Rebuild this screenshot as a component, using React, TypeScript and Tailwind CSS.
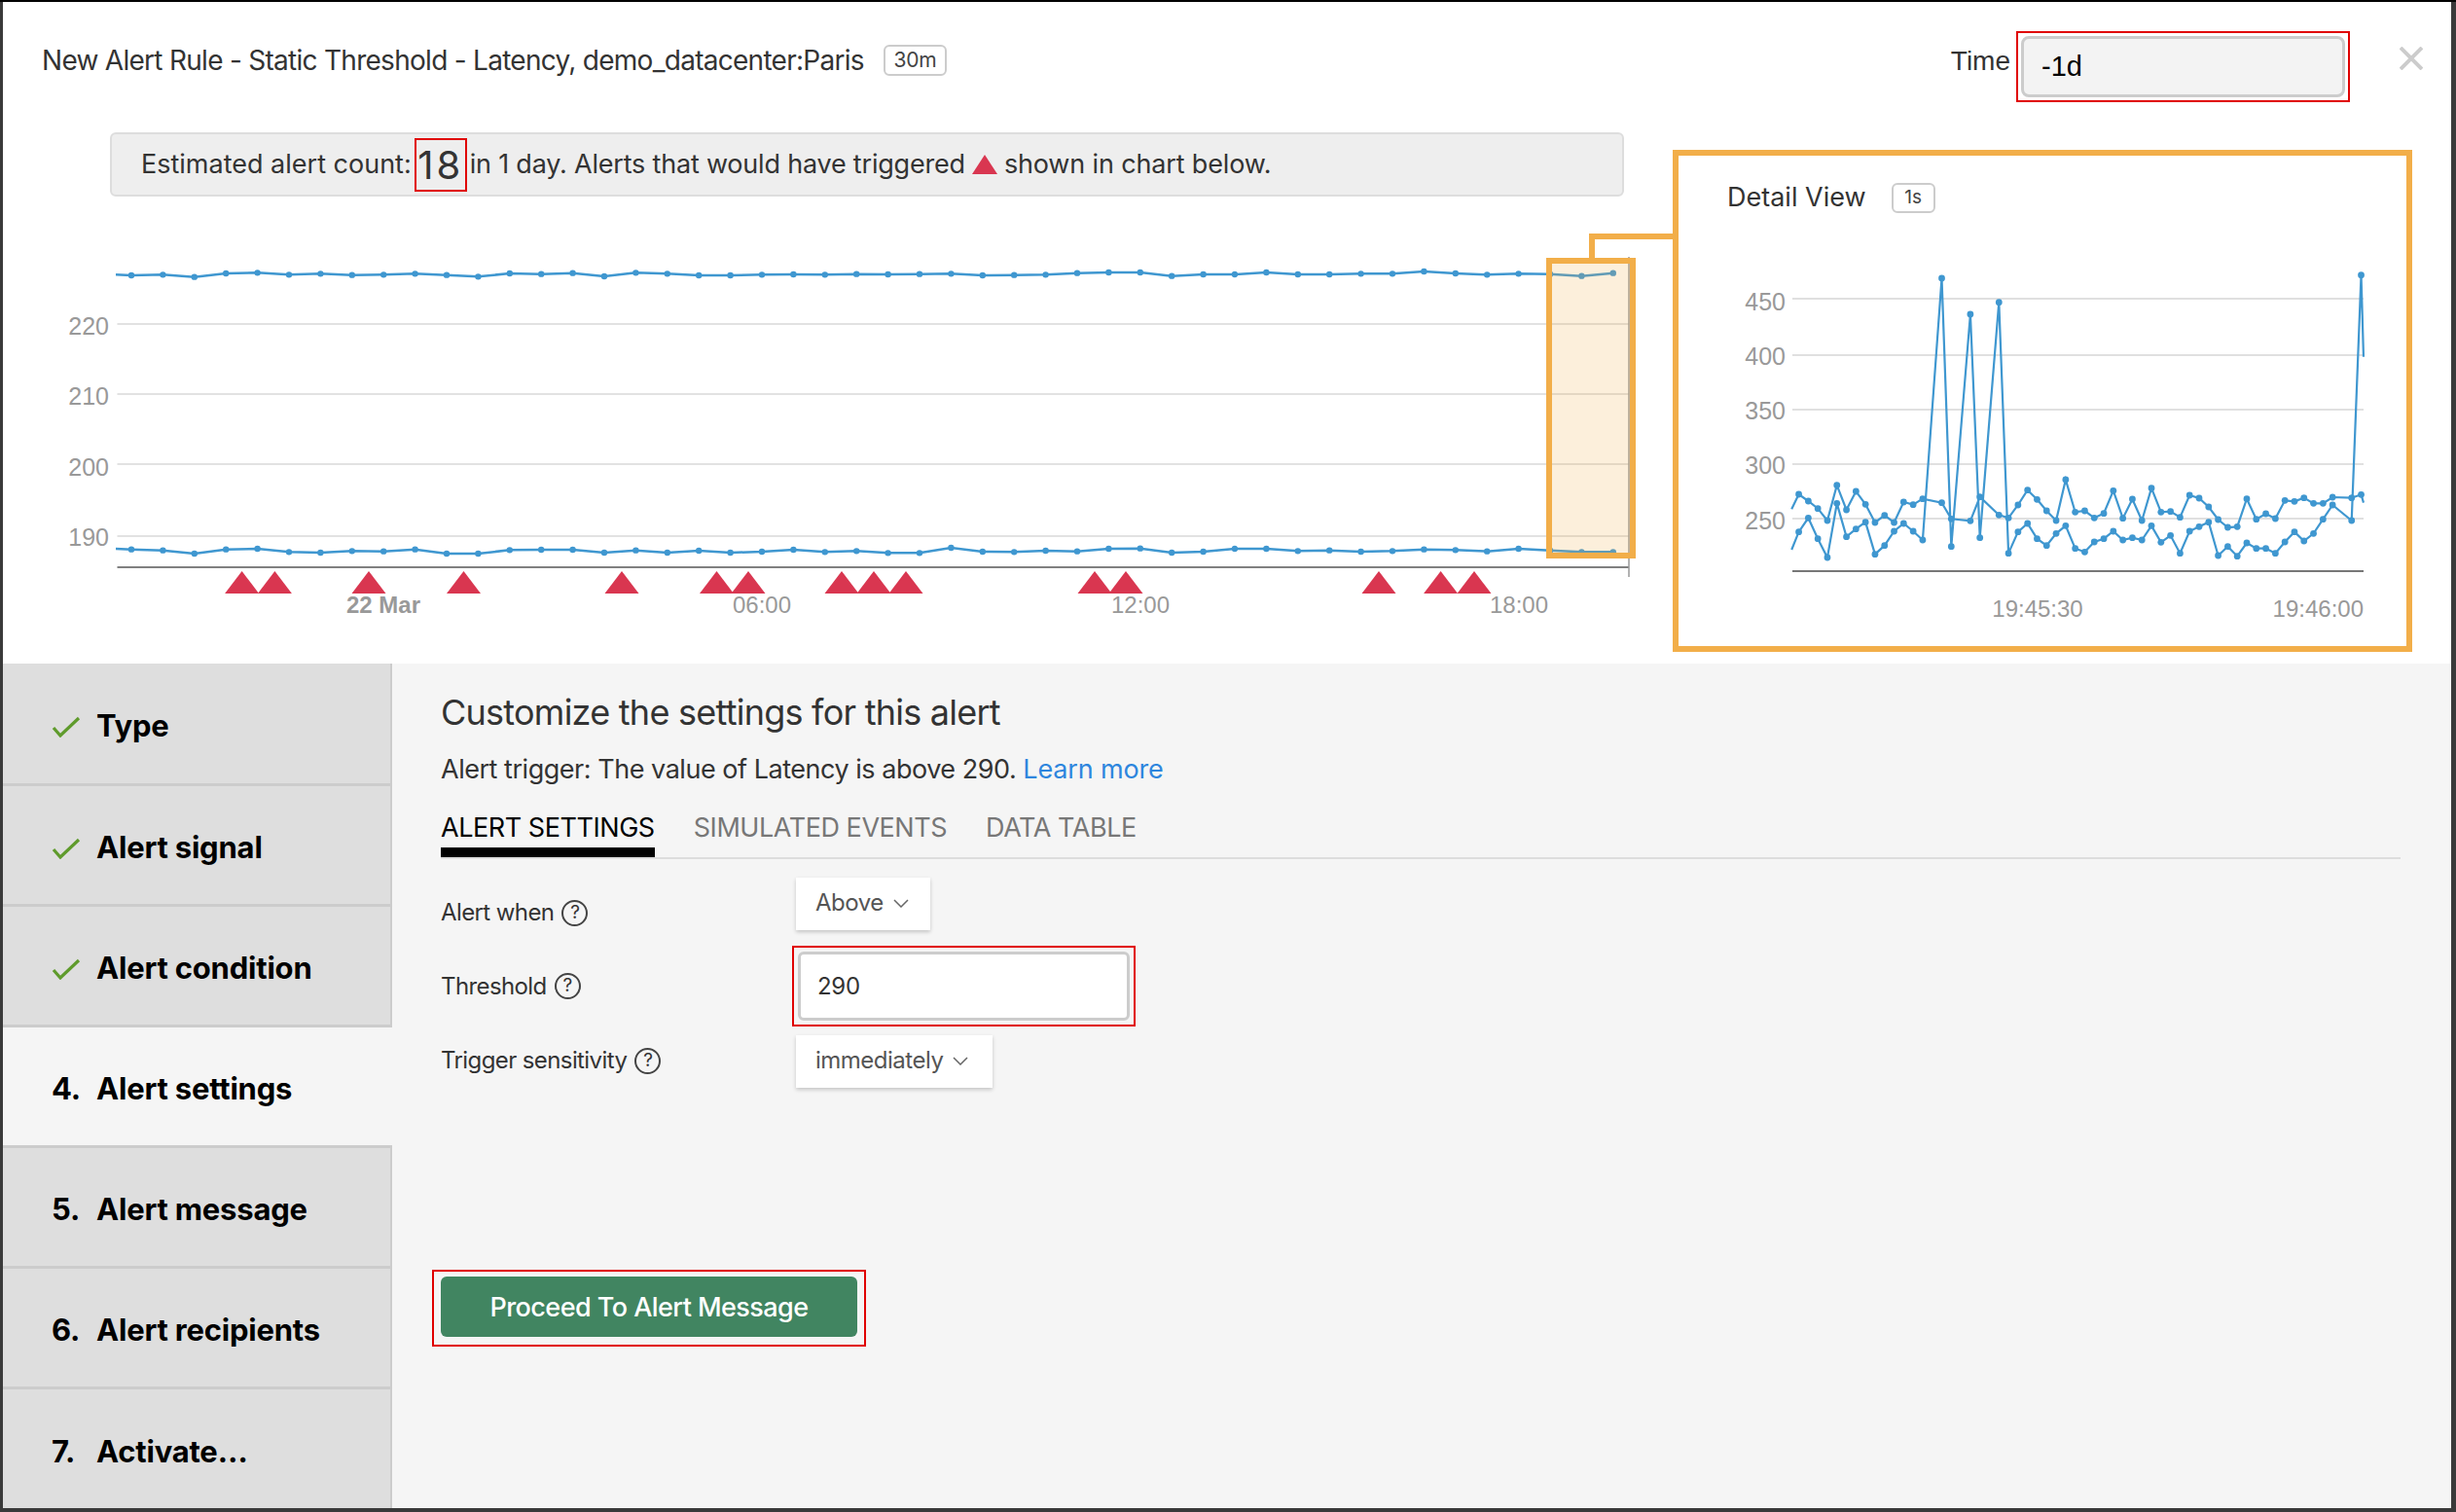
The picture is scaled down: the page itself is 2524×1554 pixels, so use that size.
import React from 'react';

const LINE = '#3f97d0';
const ORANGE = '#f2ae49';

// main chart samples, read off the picture (y offset in 1/3 px from 240)
const topSeries = [129, 127, 134, 123, 121, 127, 124, 128, 127, 124, 128, 133, 123, 125, 122, 132, 121, 124, 129, 129, 127, 126, 127, 125, 126, 125, 124, 129, 128, 127, 122, 120, 120, 131, 126, 126, 120, 126, 126, 124, 124, 117, 123, 127, 124, 125, 131, 122];
const bottomSeries = [974, 977, 987, 974, 972, 982, 984, 979, 980, 974, 987, 987, 976, 975, 975, 984, 977, 984, 978, 984, 981, 975, 982, 979, 985, 985, 969, 981, 982, 978, 980, 972, 971, 984, 981, 972, 972, 979, 977, 981, 979, 974, 976, 980, 972, 977, 982, 982];
const markers = [248.6, 282.4, 379, 476.5, 639, 736.5, 769, 865, 898, 931, 1125, 1157, 1417, 1480.6, 1515];

const detailA = [[52, 790], [70, 744], [94, 765], [118, 788], [142, 825], [166, 716], [190, 792], [214, 735], [238, 775], [262, 831], [286, 809], [310, 831], [334, 768], [358, 776], [382, 758], [430, 770], [454, 820], [502, 826], [526, 752], [574, 808], [598, 817], [622, 777], [646, 731], [670, 760], [694, 795], [718, 825], [742, 699], [766, 799], [790, 795], [814, 817], [838, 803], [862, 733], [886, 818], [910, 759], [934, 825], [958, 725], [982, 799], [1006, 797], [1030, 815], [1054, 747], [1078, 756], [1102, 783], [1126, 822], [1150, 846], [1174, 844], [1198, 758], [1222, 821], [1246, 804], [1270, 819], [1294, 763], [1318, 766], [1342, 755], [1366, 772], [1390, 772], [1414, 753], [1462, 755], [1486, 745], [1492, 770]];
const detailB = [[52, 915], [70, 860], [94, 817], [118, 881], [142, 939], [166, 772], [190, 875], [214, 851], [238, 830], [262, 929], [286, 902], [310, 858], [334, 834], [358, 858], [382, 885], [430, 78], [454, 905], [502, 189], [526, 878], [574, 152], [598, 926], [622, 860], [646, 834], [670, 881], [694, 902], [718, 865], [742, 841], [766, 911], [790, 922], [814, 891], [838, 881], [862, 858], [886, 885], [910, 878], [934, 885], [958, 841], [982, 892], [1006, 871], [1030, 926], [1054, 858], [1078, 844], [1102, 830], [1126, 933], [1150, 905], [1174, 935], [1198, 894], [1222, 911], [1246, 911], [1270, 926], [1294, 891], [1318, 860], [1342, 888], [1366, 865], [1390, 821], [1414, 777], [1462, 825], [1486, 68], [1492, 320]];

const mainPts = (s: number[]) => s.map((v, i) => [135 + 32.4 * i, 240 + v / 3]);
const detailPts = (s: number[][]) => s.map(([x, y]) => [1820 + x / 2.45, 260 + y / 3]);
const toPath = (p: number[][]) => p.map(([x, y]) => `${x},${y}`).join(' ');

const MainChart = () => {
  const top = mainPts(topSeries);
  const bottom = mainPts(bottomSeries);
  return (
    <svg viewBox="3 202 1716 480" className="block w-[1716px] h-[480px]">
      {[333, 405, 477, 551].map((y) => (
        <line key={y} x1={120.5} x2={1674} y1={y} y2={y} stroke="#e2e2e2" strokeWidth={2} />
      ))}
      {[['220', 335], ['210', 407], ['200', 480], ['190', 552]].map(([t, y]) => (
        <text key={t} x={112} y={Number(y) + 9} textAnchor="end" className="font-['Liberation_Sans',sans-serif] text-[25px] fill-[#999]">{t}</text>
      ))}
      <line x1={120.5} x2={1674} y1={583} y2={583} stroke="#808080" strokeWidth={2} />
      <line x1={1674} x2={1674} y1={264} y2={593} stroke="#999" strokeWidth={1.5} />
      <polyline points={toPath([[119, 282.3], ...top])} fill="none" stroke={LINE} strokeWidth={2.5} />
      <polyline points={toPath([[119, 564], ...bottom])} fill="none" stroke={LINE} strokeWidth={2.5} />
      {[...top, ...bottom].map(([x, y], i) => (
        <circle key={i} cx={x} cy={y} r={3.2} fill={LINE} />
      ))}
      {markers.map((x) => (
        <polygon key={x} points={`${x},587 ${x + 17.5},610 ${x - 17.5},610`} fill="#d93650" />
      ))}
      <text x={394} y={630} textAnchor="middle" className="font-['Liberation_Sans',sans-serif] text-[24px] font-bold fill-[#999]">22 Mar</text>
      <text x={783} y={630} textAnchor="middle" className="font-['Liberation_Sans',sans-serif] text-[24px] fill-[#999]">06:00</text>
      <text x={1172} y={630} textAnchor="middle" className="font-['Liberation_Sans',sans-serif] text-[24px] fill-[#999]">12:00</text>
      <text x={1561} y={630} textAnchor="middle" className="font-['Liberation_Sans',sans-serif] text-[24px] fill-[#999]">18:00</text>
      <rect x={1592} y={268} width={86} height={303} fill={ORANGE} fillOpacity={0.2} stroke={ORANGE} strokeWidth={6} />
      <path d="M1636 265V243H1719" fill="none" stroke={ORANGE} strokeWidth={6} />
    </svg>
  );
};

const DetailChart = () => {
  const a = detailPts(detailA);
  const b = detailPts(detailB);
  return (
    <svg viewBox="1725 240 748 424" className="block w-[748px] h-[424px]">
      {[307, 365, 421, 477, 533].map((y) => (
        <line key={y} x1={1842} x2={2429} y1={y} y2={y} stroke="#e0e0e0" strokeWidth={2} />
      ))}
      {[['450', 310], ['400', 366], ['350', 422], ['300', 478], ['250', 535]].map(([t, y]) => (
        <text key={t} x={1835} y={Number(y) + 9} textAnchor="end" className="font-['Liberation_Sans',sans-serif] text-[25px] fill-[#999]">{t}</text>
      ))}
      <line x1={1842} x2={2429} y1={587} y2={587} stroke="#777" strokeWidth={2} />
      <polyline points={toPath(a)} fill="none" stroke={LINE} strokeWidth={2.2} />
      <polyline points={toPath(b)} fill="none" stroke={LINE} strokeWidth={2.2} />
      {[...a.slice(1, -1), ...b.slice(1, -1)].map(([x, y], i) => (
        <circle key={i} cx={x} cy={y} r={3.4} fill={LINE} />
      ))}
      <text x={2094} y={634} textAnchor="middle" className="font-['Liberation_Sans',sans-serif] text-[24px] fill-[#999]">19:45:30</text>
      <text x={2429} y={634} textAnchor="end" className="font-['Liberation_Sans',sans-serif] text-[24px] fill-[#999]">19:46:00</text>
    </svg>
  );
};

const Badge = ({ children, className }: { children: React.ReactNode; className: string }) => (
  <span className={`flex items-center justify-center rounded-[6px] border-2 border-[#ccc] text-[#444] ${className}`}>
    {children}
  </span>
);

const Help = () => (
  <span className="flex w-[27px] h-[27px] items-center justify-center rounded-full border-2 border-[#444] text-[19px] text-[#333]">?</span>
);

const Chevron = () => (
  <svg viewBox="0 0 16 9" className="w-[16px] h-[9px]">
    <polyline points="1,1 8,8 15,1" fill="none" stroke="#666" strokeWidth={1.5} />
  </svg>
);

const Check = () => (
  <svg viewBox="0 0 30 22" className="w-[30px] h-[22px]">
    <polyline points="2,12 9,20 28,2" fill="none" stroke="#5f9b2c" strokeWidth={3.2} />
  </svg>
);

const steps = [
  { label: 'Type', done: true },
  { label: 'Alert signal', done: true },
  { label: 'Alert condition', done: true },
  { label: 'Alert settings', num: '4.', active: true },
  { label: 'Alert message', num: '5.' },
  { label: 'Alert recipients', num: '6.' },
  { label: 'Activate…', num: '7.' },
];

const Dropdown = ({ label, className }: { label: string; className: string }) => (
  <div className={`flex h-[54px] items-center gap-[10px] bg-white pl-[20px] pb-[2px] text-[24px] tracking-[-0.5px] text-[#555] shadow-[0_2px_4px_rgba(0,0,0,0.2)] ${className}`}>
    {label}
    <Chevron />
  </div>
);

export default function App() {
  return (
    <div className="flex h-[1554px] w-[2524px] flex-col bg-[#3a3a3a] pl-[3px] pr-[5px] pb-[4px] font-['Inter',sans-serif]">
      <div className="h-[2px] -ml-[3px] -mr-[5px] shrink-0 bg-black" />
      <div className="flex h-[680px] shrink-0 flex-col bg-white">
        <div className="flex h-[120px] shrink-0 items-center pl-[40px] pr-[29px]">
          <h1 className="text-[28px] font-normal tracking-[-0.72px] text-[#333]">New Alert Rule - Static Threshold - Latency, demo_datacenter:Paris</h1>
          <Badge className="ml-[20px] h-[32px] w-[65px] text-[21px] tracking-[-0.3px]">30m</Badge>
          <span className="ml-auto mr-[6px] mt-[2px] font-['Liberation_Sans',sans-serif] text-[28px] text-[#333]">Time</span>
          <div className="mt-[13px] h-[73px] w-[343px] border-2 border-[#e00000] p-[3px]">
            <div className="flex h-full items-center rounded-[8px] border-[3px] border-[#ccc] bg-[#f3f3f3] pl-[18px] font-['Liberation_Sans',sans-serif] text-[29px] text-black">-1d</div>
          </div>
          <svg viewBox="0 0 24 24" className="mb-[4px] ml-[51px] h-[24px] w-[24px]">
            <path d="M1 1L23 23M23 1L1 23" stroke="#ccc" strokeWidth={4} fill="none" />
          </svg>
        </div>
        <div className="flex flex-1">
          <div className="w-[1716px] shrink-0">
            <div className="ml-[110px] mt-[14px] flex h-[66px] w-[1556px] items-center rounded-[6px] border-2 border-[#ddd] bg-[#eee] pl-[30px] text-[27px] text-[#333]">
              <span>Estimated alert count:</span>
              <span className="mx-[3px] flex h-[55px] w-[54px] items-center justify-center border-2 border-[#e00000] pt-[2px] text-[40px] tracking-[3px]">18</span>
              <span className="tracking-[-0.2px]">in 1 day. Alerts that would have triggered</span>
              <svg viewBox="0 0 26 20" className="mx-[7px] h-[20px] w-[26px]">
                <polygon points="13,0 26,20 0,20" fill="#d93650" />
              </svg>
              <span className="tracking-[-0.15px]">shown in chart below.</span>
            </div>
            <MainChart />
          </div>
          <div className="mt-[32px] h-[516px] w-[760px] border-[6px] border-[#f2ae49] bg-white">
            <div className="flex h-[80px] items-center pl-[50px] pt-[6px]">
              <span className="text-[27px] text-[#333]">Detail View</span>
              <Badge className="ml-[26px] h-[31px] w-[45px] text-[19px]">1s</Badge>
            </div>
            <DetailChart />
          </div>
        </div>
      </div>
      <div className="flex flex-1 bg-[#f5f5f5]">
        <div className="flex w-[400px] shrink-0 flex-col border-r-2 border-[#ccc]">
          {steps.map((s, i) => (
            <div
              key={s.label}
              className={`flex items-center pl-[50px] pt-[6px] text-[31px] font-bold tracking-[-0.2px] text-black ${i === 0 ? 'h-[126px]' : i === 6 ? 'flex-1' : 'h-[124px]'} ${i < 6 ? 'border-b-[3px] border-[#ccc]' : ''} ${s.active ? 'bg-[#f5f5f5] -mr-[2px] relative' : 'bg-[#dedede]'}`}
            >
              <span className="flex w-[46px] items-center">{s.done ? <Check /> : s.num}</span>
              {s.label}
            </div>
          ))}
        </div>
        <div className="flex-1 pl-[50px] pr-[52px]">
          <h2 className="mt-[28px] h-[44px] text-[36px] font-normal leading-[44px] tracking-[-0.75px] text-[#333]">Customize the settings for this alert</h2>
          <p className="mt-[19px] h-[36px] text-[27px] leading-[36px] text-[#333]">
            <span className="tracking-[-0.47px]">Alert trigger: The value of Latency is above 290. </span>
            <span className="tracking-[-0.15px] text-[#2e86de]">Learn more</span>
          </p>
          <div className="mt-[25px] flex gap-[40px] border-b-2 border-[#ddd] text-[27px] leading-[32px] tracking-[-0.45px]">
            <span className="border-b-[10px] border-black pb-[4px] pt-[1px] text-black">ALERT SETTINGS</span>
            <span className="pt-[1px] text-[#777]">SIMULATED EVENTS</span>
            <span className="pt-[1px] text-[#777]">DATA TABLE</span>
          </div>
          <div className="mt-[19px] flex items-start">
            <div className="flex w-[365px] items-center gap-[8px] pt-[18px] text-[24px] tracking-[-0.6px] text-[#333]">Alert when <Help /></div>
            <Dropdown label="Above" className="w-[138px]" />
          </div>
          <div className="mt-[16px] flex items-center">
            <div className="flex w-[361px] items-center gap-[8px] text-[24px] tracking-[-0.6px] text-[#333]">Threshold <Help /></div>
            <div className="h-[83px] w-[353px] border-2 border-[#e00000] p-[4px]">
              <div className="flex h-full items-center rounded-[6px] border-[3px] border-[#ccc] bg-white pl-[17px] text-[24px] tracking-[-0.3px] text-[#333]">290</div>
            </div>
          </div>
          <div className="mt-[9px] flex items-start">
            <div className="flex w-[365px] items-center gap-[8px] pt-[8px] text-[24px] tracking-[-0.6px] text-[#333]">Trigger sensitivity <Help /></div>
            <Dropdown label="immediately" className="w-[202px]" />
          </div>
          <div className="-ml-[9px] mt-[187px] w-[446px] border-2 border-[#e00000] px-[7px] pb-[8px] pt-[5px]">
            <button className="flex h-[62px] w-full items-center justify-center rounded-[6px] bg-[#418561] pt-[3px] text-[27px] font-medium tracking-[-0.55px] text-white">Proceed To Alert Message</button>
          </div>
        </div>
      </div>
    </div>
  );
}
